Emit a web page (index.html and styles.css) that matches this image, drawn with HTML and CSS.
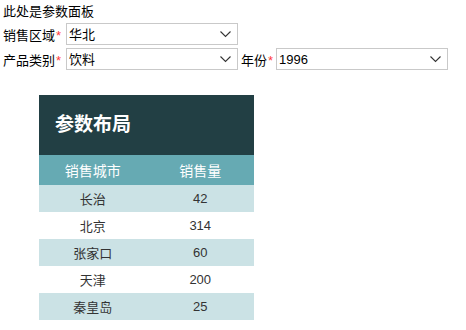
FILE: index.html
```html
<!DOCTYPE html>
<html lang="zh">
<head>
  <meta charset="UTF-8" />
  <title>参数布局</title>
  <link rel="stylesheet" href="styles.css">
</head>
<body>
  <div class="panel">
    <div class="panel-title">此处是参数面板</div>
    <div class="row">
      <label class="lbl">销售区域<span class="req">*</span></label>
      <div class="sel">
        <select><option>华北</option></select>
        <svg class="arrow" width="11" height="7" viewBox="0 0 11 7"><path d="M0.5 0.5 L5.5 5.5 L10.5 0.5" fill="none" stroke="#333" stroke-width="1.1"/></svg>
      </div>
    </div>
    <div class="row">
      <label class="lbl">产品类别<span class="req">*</span></label>
      <div class="sel">
        <select><option>饮料</option></select>
        <svg class="arrow" width="11" height="7" viewBox="0 0 11 7"><path d="M0.5 0.5 L5.5 5.5 L10.5 0.5" fill="none" stroke="#333" stroke-width="1.1"/></svg>
      </div>
      <label class="lbl lbl-year">年份<span class="req">*</span></label>
      <div class="sel">
        <select class="num"><option>1996</option></select>
        <svg class="arrow" width="11" height="7" viewBox="0 0 11 7"><path d="M0.5 0.5 L5.5 5.5 L10.5 0.5" fill="none" stroke="#333" stroke-width="1.1"/></svg>
      </div>
    </div>
  </div>

  <div class="report">
    <div class="report-title">参数布局</div>
    <table>
      <thead>
        <tr><th>销售城市</th><th>销售量</th></tr>
      </thead>
      <tbody>
        <tr><td>长治</td><td>42</td></tr>
        <tr><td>北京</td><td>314</td></tr>
        <tr><td>张家口</td><td>60</td></tr>
        <tr><td>天津</td><td>200</td></tr>
        <tr><td>秦皇岛</td><td>25</td></tr>
      </tbody>
    </table>
  </div>
</body>
</html>
```

FILE: styles.css
```css
body {
  font-family: "Liberation Sans", "Noto Sans CJK SC", sans-serif;
  font-size: 13px;
  color: #000;
  background: #fff;
  margin: 0;
  padding: 3px;
}
.panel-title {
  line-height: 18px;
}
.row {
  display: flex;
  align-items: center;
  height: 22px;
  margin-top: 2px;
}
.row + .row {
  margin-top: 3px;
}
.lbl {
  width: 63px;
  white-space: nowrap;
}
.lbl-year {
  width: auto;
  margin-left: 3px;
  margin-right: 3px;
}
.req {
  color: #ff3b3b;
  margin-left: 1px;
}
.sel {
  position: relative;
  width: 172px;
  height: 22px;
}
.sel select {
  appearance: none;
  -webkit-appearance: none;
  width: 100%;
  height: 22px;
  margin: 0;
  padding: 0 0 0 2px;
  border: 1px solid #c9c9c9;
  border-radius: 0;
  background: #fff;
  font-family: "Liberation Sans", "Noto Sans CJK SC", sans-serif;
  font-size: 13px;
  color: #000;
  outline: none;
}
.sel .arrow {
  position: absolute;
  right: 7px;
  top: 8px;
  pointer-events: none;
}
.report {
  width: 215px;
  margin: 25px 0 0 36px;
}
.report-title {
  background: #223f44;
  color: #fff;
  height: 60px;
  line-height: 60px;
  padding-left: 16px;
  font-size: 19px;
  font-weight: bold;
}
table {
  width: 100%;
  border-collapse: collapse;
  table-layout: fixed;
}
th {
  background: #66aab3;
  color: #fff;
  font-weight: normal;
  font-size: 14px;
  height: 30px;
  padding: 0;
}
td {
  height: 27px;
  padding: 0;
  text-align: center;
  color: #333;
  font-size: 13px;
}
tbody tr:nth-child(odd) td {
  background: #cbe2e5;
}
```
